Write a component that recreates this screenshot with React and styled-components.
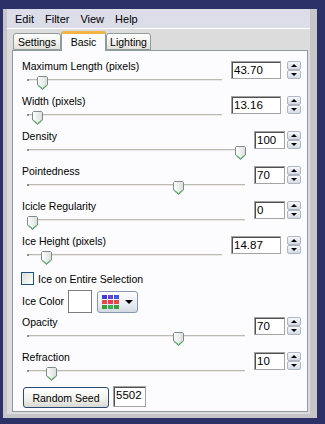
import React from "react";
import styled, { createGlobalStyle } from "styled-components";

const GlobalStyle = createGlobalStyle`
  body {
    margin: 0;
    font-family: "Liberation Sans", Arial, sans-serif;
    background: #2c3268;
  }
`;

const Frame = styled.div`
  width: 325px;
  height: 424px;
  box-sizing: border-box;
  padding: 9px 8px 6px 3px;
  background: #2c3268;
`;

const WindowEdge = styled.div`
  height: 100%;
  box-sizing: border-box;
  padding: 0 7px 4px 4px;
  background: #c6c6c8;
`;

const Client = styled.div`
  height: 100%;
  display: flex;
  flex-direction: column;
  background: #dcdcdc;
`;

const MenuBar = styled.div`
  display: flex;
  align-items: center;
  gap: 11px;
  height: 19px;
  padding-left: 8px;
  background: #dcdde8;
  border-bottom: 1px solid #ffffff;
  font-size: 11px;
  color: #000;
`;

const Body = styled.div`
  flex: 1;
  display: flex;
  flex-direction: column;
  padding: 2px 2px 2px 5px;
`;

const TabStrip = styled.div`
  display: flex;
  align-items: flex-end;
  height: 19px;
  padding-left: 1px;
  position: relative;
  z-index: 1;
`;

const Tab = styled.div`
  box-sizing: border-box;
  width: ${(p) => p.$w}px;
  height: ${(p) => (p.$active ? 20 : 17)}px;
  margin-bottom: ${(p) => (p.$active ? -1 : 0)}px;
  display: flex;
  align-items: center;
  justify-content: center;
  font-size: 10.5px;
  color: #000;
  border: 1px solid #919b9c;
  border-bottom: ${(p) => (p.$active ? "none" : "1px solid #919b9c")};
  border-top: ${(p) => (p.$active ? "3px solid #f3b443" : "1px solid #919b9c")};
  border-radius: 3px 3px 0 0;
  background: ${(p) =>
    p.$active ? "#fcfcfe" : "linear-gradient(#ffffff, #f0efea 60%, #e2e1dc)"};
  padding-bottom: ${(p) => (p.$active ? 2 : 0)}px;
`;

const Panel = styled.div`
  flex: 1;
  box-sizing: border-box;
  display: flex;
  flex-direction: column;
  padding: 9px 6px 0 9px;
  background: #fcfcfe;
  border: 1px solid #919b9c;
`;

const Row = styled.div`
  display: flex;
  align-items: flex-start;
  height: 35px;
  margin-top: ${(p) => p.$mt || 0}px;
`;

const LeftCol = styled.div`
  flex: 1;
  display: flex;
  flex-direction: column;
  margin-right: 9px;
`;

const Label = styled.div`
  font-size: 10.5px;
  line-height: 13px;
  height: 13px;
  color: #000;
  white-space: nowrap;
`;

const Slider = styled.div`
  position: relative;
  height: 20px;
  margin-left: 5px;
`;

const Track = styled.div`
  position: absolute;
  left: 0;
  right: 0;
  top: 6px;
  height: 1px;
  background: #bdbab2;
  border-bottom: 1px solid #e9e8e4;

  &::before {
    content: "";
    position: absolute;
    left: 0;
    top: 0;
    width: 2px;
    height: 2px;
    background: #8f8d88;
  }
`;

const ThumbWrap = styled.div`
  position: absolute;
  top: 3px;
  width: 11px;
  height: 14px;
`;

const Spin = styled.div`
  display: flex;
  align-items: flex-start;
  gap: ${(p) => (p.$wide ? 6 : 2)}px;
  margin-top: 1px;
`;

const NumBox = styled.div`
  box-sizing: border-box;
  width: ${(p) => p.$w}px;
  height: ${(p) => p.$h || 18}px;
  padding: 1px 0 0 2px;
  font-size: 11.5px;
  line-height: 15px;
  color: #000;
  background: #fff;
  border: 1px solid #a4a4a4;
  box-shadow: inset 1px 1px 0 #505050;
`;

const SpinButtons = styled.div`
  display: flex;
  flex-direction: column;
  gap: 0;
`;

const SpinBtn = styled.div`
  box-sizing: border-box;
  width: 14px;
  height: 9px;
  display: flex;
  align-items: center;
  justify-content: center;
  border: 1px solid #aeb6c4;
  border-radius: 2px;
  background: linear-gradient(#f7f8fb, #d4dae4);
`;

const Arrow = styled.div`
  width: 0;
  height: 0;
  border-left: 3px solid transparent;
  border-right: 3px solid transparent;
  ${(p) =>
    p.$up ? "border-bottom: 3px solid #000;" : "border-top: 3px solid #000;"}
`;

const CheckRow = styled.label`
  display: flex;
  align-items: center;
  gap: 4px;
  height: 13px;
  margin: 2px 0 0 -1px;
  font-size: 10.5px;
  color: #000;
`;

const CheckBox = styled.span`
  box-sizing: border-box;
  width: 13px;
  height: 13px;
  border: 1px solid #1c5180;
  background: linear-gradient(135deg, #dcdcd6, #ffffff);
`;

const ColorRow = styled.div`
  display: flex;
  align-items: center;
  height: 23px;
  margin-top: 5px;
`;

const ColorSwatch = styled.div`
  box-sizing: border-box;
  width: 24px;
  height: 23px;
  margin-left: 4px;
  background: #fff;
  border: 1px solid #7c7c7c;
`;

const PaletteButton = styled.div`
  box-sizing: border-box;
  width: 41px;
  height: 22px;
  margin-left: 5px;
  display: flex;
  align-items: center;
  padding-left: 4px;
  gap: 6px;
  border: 1px solid #8697b4;
  border-radius: 3px;
  background: linear-gradient(#ffffff, #e6e9ef 70%, #d2d8e2);
`;

const Palette = styled.div`
  display: grid;
  grid-template-columns: repeat(3, 5px);
  grid-auto-rows: 4px;
  gap: 1px;
`;

const Cell = styled.div`
  background: ${(p) => p.$c};
`;

const DropArrow = styled.div`
  width: 0;
  height: 0;
  border-left: 4px solid transparent;
  border-right: 4px solid transparent;
  border-top: 4px solid #000;
`;

const SeedRow = styled.div`
  display: flex;
  align-items: flex-start;
  gap: 4px;
  margin-left: 1px;
`;

const XPButton = styled.div`
  box-sizing: border-box;
  width: 86px;
  height: 21px;
  margin-top: 1px;
  display: flex;
  align-items: center;
  justify-content: center;
  font-size: 10.5px;
  color: #000;
  border: 1px solid #2a4a7a;
  border-radius: 3px;
  background: linear-gradient(#ffffff, #f0f0ec 60%, #d8d8d2);
`;

const Thumb = ({ pos }) => (
  <ThumbWrap style={{ left: `calc(${pos} * (100% - 10px))` }}>
    <svg width="11" height="14" viewBox="0 0 11 14">
      <defs>
        <linearGradient id="tg" x1="0" y1="0" x2="1" y2="0">
          <stop offset="0" stopColor="#ffffff" />
          <stop offset="1" stopColor="#d9dedb" />
        </linearGradient>
      </defs>
      <path
        d="M1.5 0.5 H9.5 L10.5 1.5 V9 L5.5 13.5 L0.5 9 V1.5 Z"
        fill="url(#tg)"
        stroke="#7d898b"
      />
      <path d="M1.5 9.3 L5.5 12.6 L9.5 9.3" fill="none" stroke="#3fb34a" />
    </svg>
  </ThumbWrap>
);

const SliderRow = ({ label, value, wide, pos, mt }) => (
  <Row $mt={mt}>
    <LeftCol>
      <Label>{label}</Label>
      <Slider>
        <Track />
        <Thumb pos={pos} />
      </Slider>
    </LeftCol>
    <Spin $wide={wide}>
      <NumBox $w={wide ? 50 : 31}>{value}</NumBox>
      <SpinButtons>
        <SpinBtn>
          <Arrow $up />
        </SpinBtn>
        <SpinBtn>
          <Arrow />
        </SpinBtn>
      </SpinButtons>
    </Spin>
  </Row>
);

const palette = [
  "#3a3ae8", "#7040d0", "#3a5ae8",
  "#e84848", "#e83a62", "#e84848",
  "#38a038", "#38b05a", "#38a038",
];

const App = () => (
  <>
    <GlobalStyle />
    <Frame>
      <WindowEdge>
        <Client>
          <MenuBar>
            <span>Edit</span>
            <span>Filter</span>
            <span>View</span>
            <span>Help</span>
          </MenuBar>
          <Body>
            <TabStrip>
              <Tab $w={48}>Settings</Tab>
              <Tab $w={45} $active>
                Basic
              </Tab>
              <Tab $w={45}>Lighting</Tab>
            </TabStrip>
            <Panel>
              <SliderRow label="Maximum Length (pixels)" value="43.70" wide pos={0.054} />
              <SliderRow label="Width (pixels)" value="13.16" wide pos={0.027} />
              <SliderRow label="Density" value="100" pos={1} />
              <SliderRow label="Pointedness" value="70" pos={0.7} />
              <SliderRow label="Icicle Regularity" value="0" pos={0} />
              <SliderRow label="Ice Height (pixels)" value="14.87" wide pos={0.076} />
              <CheckRow>
                <CheckBox />
                Ice on Entire Selection
              </CheckRow>
              <ColorRow>
                <Label>Ice Color</Label>
                <ColorSwatch />
                <PaletteButton>
                  <Palette>
                    {palette.map((c, i) => (
                      <Cell key={i} $c={c} />
                    ))}
                  </Palette>
                  <DropArrow />
                </PaletteButton>
              </ColorRow>
              <SliderRow label="Opacity" value="70" pos={0.7} mt={3} />
              <SliderRow label="Refraction" value="10" pos={0.09} />
              <SeedRow>
                <XPButton>Random Seed</XPButton>
                <NumBox $w={33} $h={21}>
                  5502
                </NumBox>
              </SeedRow>
            </Panel>
          </Body>
        </Client>
      </WindowEdge>
    </Frame>
  </>
);

export default App;
